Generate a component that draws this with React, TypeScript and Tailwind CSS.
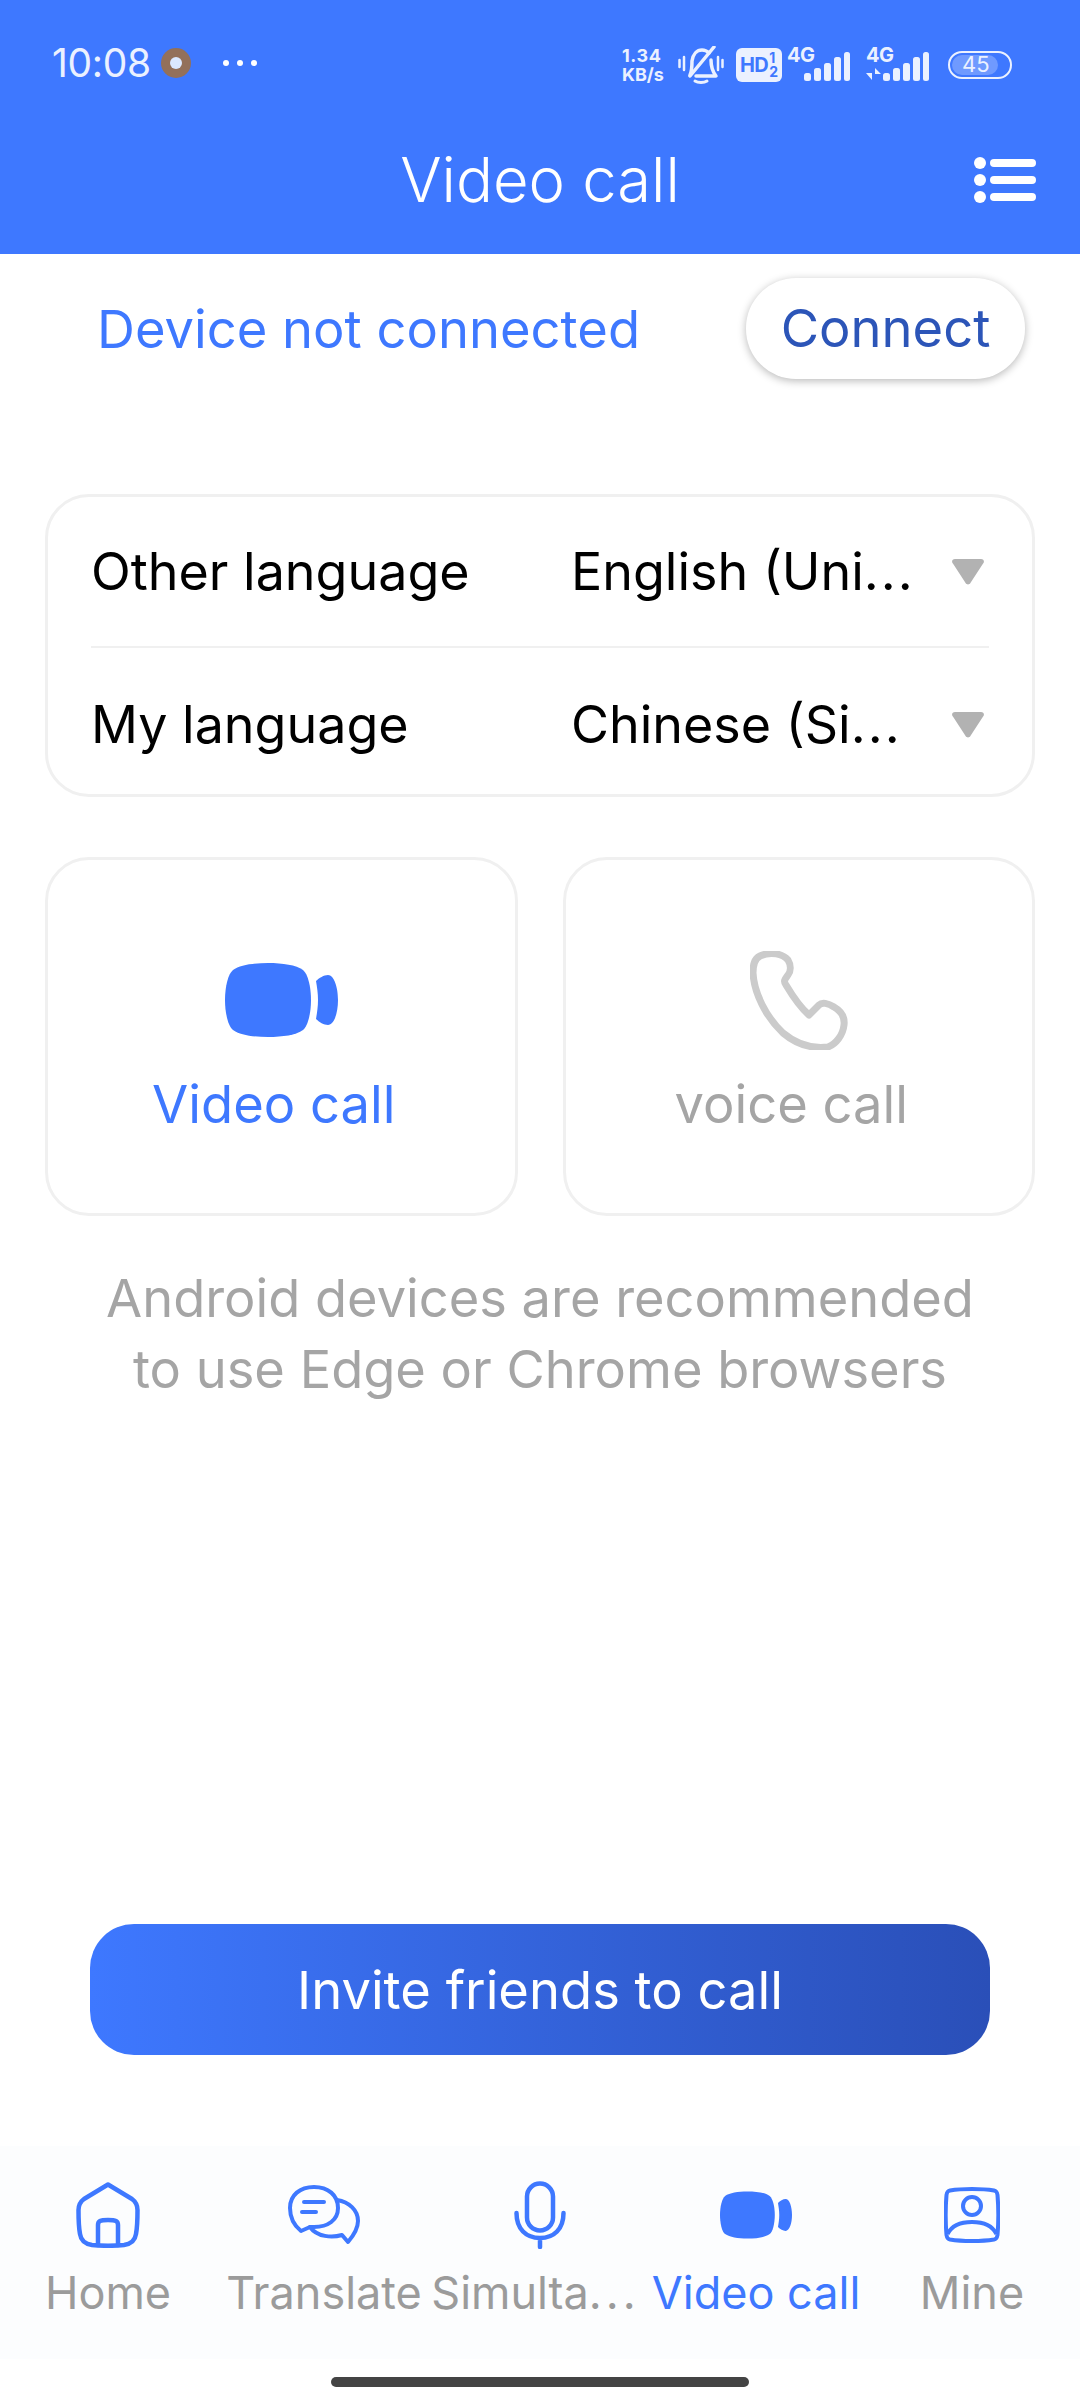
const font = { fontFamily: '"Inter", "Noto Sans", sans-serif' };

function VideoIcon({ className }: { className?: string }) {
  return (
    <svg viewBox="0 0 113 74" className={className} fill="#3e78ff">
      <path d="M8 7 C15 2 28 0 43 0 C58 0 71 2 78 7 C83 11 86 24 86 37 C86 50 83 63 78 67 C71 72 58 74 43 74 C28 74 15 72 8 67 C3 63 0 50 0 37 C0 24 3 11 8 7 Z" />
      <path d="M91 18 C94 15 99 12 103 12 C109 12 113 24 113 37 C113 50 109 62 103 62 C99 62 94 59 91 56 C92 50 93 44 93 37 C93 30 92 24 91 18 Z" />
    </svg>
  );
}

function HomeIcon() {
  return (
    <svg viewBox="0 0 64 66" className="h-[66px] w-[64px]" fill="none" stroke="#3e78ff" strokeWidth="4.5" strokeLinejoin="round" strokeLinecap="round">
      <path d="M32 2.5 L56 17 C60 20 61.5 23 61.5 28 C61.5 36 61.5 44 60 52 C59 59 55 62 48 63 C38 64 26 64 16 63 C9 62 5 59 4 52 C2.5 44 2.5 36 2.5 28 C2.5 23 4 20 8 17 Z" />
      <path d="M22 63 V43 C22 39 24 38 32 38 C40 38 42 39 42 43 V63" />
    </svg>
  );
}

function ChatIcon() {
  return (
    <svg viewBox="0 0 72 60" className="h-[60px] w-[72px]" fill="none" stroke="#3e78ff" strokeWidth="4" strokeLinejoin="round" strokeLinecap="round">
      <path d="M26 2 C40 2 50 10 50 23 C50 35 40 42 26 42 L22 42 L13 46 C8 42 2 34 2 23 C2 10 12 2 26 2 Z" />
      <path d="M49 15 C61 17 70 25 70 36 C70 44 66 50 60 57 L54 50 C44 53 29 52 22 42" />
      <path d="M16 17 H36 M14 27 H28" strokeWidth="4" />
    </svg>
  );
}

function MicIcon() {
  return (
    <svg viewBox="0 0 52 68" className="h-[68px] w-[52px]" fill="none" stroke="#3e78ff" strokeWidth="4.5" strokeLinecap="round">
      <rect x="13" y="2.5" width="26" height="47" rx="13" />
      <path d="M2.5 32 C2.5 48 12 57 26 57 C40 57 49.5 48 49.5 32 M26 57 V66" />
    </svg>
  );
}

function MineIcon() {
  return (
    <svg viewBox="0 0 56 56" className="h-[56px] w-[56px]" fill="none" stroke="#3e78ff" strokeWidth="4">
      <path d="M6 3.5 C18 1.5 38 1.5 50 3.5 C52.5 4 53 5 53.5 8 C54.5 20 54.5 36 53.5 48 C53 51 52.5 52 50 52.5 C38 54.5 18 54.5 6 52.5 C3.5 52 3 51 2.5 48 C1.5 36 1.5 20 2.5 8 C3 5 3.5 4 6 3.5 Z" />
      <circle cx="28" cy="19" r="9" />
      <path d="M3.5 47 C8 38 18 35 28 35 C38 35 48 38 52.5 47" />
    </svg>
  );
}

function PhoneIcon() {
  return (
    <svg viewBox="0 0 98 99" className="h-[99px] w-[98px]" fill="none" stroke="#cbcbcb" strokeWidth="7" strokeLinejoin="round">
      <path d="M10 5 C4 8 3 14 3 22 C4 42 16 66 33 82 C46 93 62 98 78 96 C86 93 93 84 94 74 C95 66 91 60 84 56 C78 52 72 51 69 54 L59 64 C52 58 42 44 36 34 C33 30 35 28 38 24 C41 20 41 14 38 9 C33 3 21 0 10 5 Z" />
    </svg>
  );
}

function Signal({ arrows }: { arrows?: boolean }) {
  return (
    <div className="relative h-[36px] w-[66px]">
      <span className="absolute left-0 top-[-4px] text-[20px] font-bold leading-[24px] tracking-[-0.5px]">4G</span>
      <svg viewBox="0 0 66 36" className="h-[36px] w-[66px]" fill="#ebf1ff">
        {arrows && <path d="M6 22 V33 L0 26 H6 Z M9 33 V21 L15 27 H9 Z" />}
        <rect x="17" y="26" width="7" height="8" rx="2.5" />
        <rect x="27" y="21" width="7" height="13" rx="2.5" />
        <rect x="37" y="16" width="7" height="18" rx="2.5" />
        <rect x="47" y="10" width="7" height="24" rx="2.5" />
        <rect x="57" y="5" width="6" height="29" rx="2.5" />
      </svg>
    </div>
  );
}

function StatusBar() {
  return (
    <div className="flex h-[84px] items-end justify-between pl-[52px] pr-[68px] text-[#ebf1ff]">
      <div className="flex items-center">
        <span className="text-[39px] leading-[42px] tracking-[-0.3px]">10:08</span>
        <span className="ml-[10px] flex h-[30px] w-[30px] items-center justify-center rounded-full bg-[#93705a]">
          <span className="h-[12px] w-[12px] rounded-full bg-[#dbe8ff]" />
        </span>
        <span className="ml-[32px] flex gap-[8px]">
          <span className="h-[6px] w-[6px] rounded-full bg-white" />
          <span className="h-[6px] w-[6px] rounded-full bg-white" />
          <span className="h-[6px] w-[6px] rounded-full bg-white" />
        </span>
      </div>
      <div className="flex items-center">
        <div className="flex w-[46px] flex-col items-start text-[18px] font-bold leading-[19px]">
          <span className="tracking-[0.6px]">1.34</span>
          <span>KB/s</span>
        </div>
        <svg viewBox="0 0 46 38" className="ml-[10px] h-[38px] w-[46px]" fill="none" stroke="#ebf1ff" strokeWidth="3.5" strokeLinecap="round" strokeLinejoin="round">
          <path d="M1.5 14 V21 M6 11 V24 M40 11 V24 M44.5 14 V21" strokeWidth="2.5" />
          <path d="M12 29 C14 25 14 20 14 15 C15 8 19 4 24 4 C27 4 29 5 31 7 M33 14 C33 21 34 25 38 30 L18 30" />
          <path d="M12 30 L36 1" />
          <path d="M17 35 C20 37 26 37 29 35" strokeWidth="3" />
        </svg>
        <div className="ml-[12px] flex h-[34px] w-[46px] items-center justify-center rounded-[6px] bg-[#ebf1ff] text-[#3e78ff]">
          <span className="text-[20px] font-bold leading-none tracking-[-0.5px]">HD</span>
          <span className="ml-[1px] flex flex-col text-[14px] font-bold leading-[14px]">
            <span>1</span>
            <span>2</span>
          </span>
        </div>
        <div className="ml-[5px]"><Signal /></div>
        <div className="ml-[13px]"><Signal arrows /></div>
        <div className="relative ml-[16px] flex h-[28px] w-[64px] items-center rounded-full border-[2.5px] border-[#ebf1ff] p-[2px]">
          <span className="h-full w-[46px] rounded-full bg-[#6f9aff]" />
          <span className="absolute left-[12px] top-[0px] text-[22px] leading-[23px]">45</span>
        </div>
      </div>
    </div>
  );
}

function NavBar() {
  return (
    <div className="relative flex h-[170px] items-center justify-center pt-[22px]">
      <h1 className="text-[61.5px] font-light leading-[72px] text-white">Video call</h1>
      <div className="absolute right-[44px] top-[73px] flex flex-col gap-[5px]">
        {[0, 1, 2].map((i) => (
          <div key={i} className="flex items-center gap-[4px]">
            <span className="h-[12px] w-[12px] rounded-full bg-white" />
            <span className="h-[8px] w-[46px] rounded-full bg-white" />
          </div>
        ))}
      </div>
    </div>
  );
}

function LangRow({ label, value, className }: { label: string; value: string; className: string }) {
  return (
    <div className={`flex items-center justify-between ${className}`}>
      <span className="text-[52px] leading-[60px] text-black">{label}</span>
      <div className="flex w-[418px] items-center justify-between">
        <span className="whitespace-nowrap text-[52px] leading-[60px] text-black">
          {value}
          <span className="tracking-[2px]">...</span>
        </span>
        <svg viewBox="0 0 33 27" className="mr-[5px] h-[26px] w-[32px]" fill="#b2b2b2">
          <path d="M3 0 H30 C33 0 34 3 32 5 L19 25 C18 27 15 27 14 25 L1 5 C-1 3 0 0 3 0 Z" />
        </svg>
      </div>
    </div>
  );
}

function CallCard({ label, active, children }: { label: string; active?: boolean; children: React.ReactNode }) {
  return (
    <div className="flex h-[359px] flex-1 flex-col items-center rounded-[44px] border-[3px] border-[#f0f0f0] pt-[90px]">
      <div className="flex h-[100px] items-center justify-center">{children}</div>
      <span className={`mr-[15px] mt-[24px] text-[52.5px] leading-[60px] ${active ? "text-[#3e78ff]" : "text-[#a5a5a5]"}`}>{label}</span>
    </div>
  );
}

function Tab({ label, tail, active, children }: { label: string; tail?: string; active?: boolean; children: React.ReactNode }) {
  return (
    <div className="flex flex-col items-center">
      <div className="flex h-[70px] items-center justify-center">{children}</div>
      <span className={`mt-[18px] whitespace-nowrap text-[45px] leading-[50px] ${tail ? "mr-[9px]" : ""} ${active ? "text-[#3e78ff]" : "text-[#9b9b9b]"}`}>
        {label}
        {tail && <span className="tracking-[4px]">{tail}</span>}
      </span>
    </div>
  );
}

export default function App() {
  return (
    <div className="flex h-[2400px] w-[1080px] flex-col overflow-hidden bg-white" style={font}>
      <header className="h-[254px] bg-[#3e78ff]">
        <StatusBar />
        <NavBar />
      </header>

      <main className="flex flex-1 flex-col">
        <div className="flex items-center pl-[97px] pr-[55px] pt-[24px]">
          <span className="flex-1 text-[52.5px] leading-[62px] text-[#3e78ff]">Device not connected</span>
          <button className="flex h-[101px] w-[279px] items-center justify-center rounded-[50px] bg-white text-[52.5px] text-[#2c55b8] shadow-[0_2px_8px_rgba(0,0,0,0.28)]">Connect</button>
        </div>

        <section className="mx-[45px] mt-[115px] flex h-[303px] flex-col rounded-[44px] border-[3px] border-[#f0f0f0] px-[43px]">
          <LangRow label="Other language" value="English (Uni" className="h-[149px]" />
          <div className="h-[2px] bg-[#f0f0f0]" />
          <LangRow label="My language" value="Chinese (Si" className="h-[146px] pt-[8px]" />
        </section>

        <section className="mx-[45px] mt-[60px] flex gap-[45px]">
          <CallCard label="Video call" active>
            <VideoIcon className="h-[74px] w-[113px]" />
          </CallCard>
          <CallCard label="voice call">
            <PhoneIcon />
          </CallCard>
        </section>

        <p className="mt-[47px] text-center text-[52.4px] leading-[71px] text-[#a5a5a5]">
          Android devices are recommended
          <br />
          to use Edge or Chrome browsers
        </p>

        <div className="mt-auto px-[90px]">
          <button className="flex h-[131px] w-full items-center justify-center rounded-[44px] bg-gradient-to-r from-[#3e78ff] to-[#2a4fb8] text-[52.5px] text-white">
            <span className="translate-y-[1px]">Invite friends to call</span>
          </button>
        </div>

        <nav className="mt-[91px] grid h-[213px] grid-cols-5 items-start bg-[#fcfdfe] pt-[34px]">
          <Tab label="Home"><HomeIcon /></Tab>
          <Tab label="Translate"><ChatIcon /></Tab>
          <Tab label="Simulta" tail="..."><MicIcon /></Tab>
          <Tab label="Video call" active><VideoIcon className="h-[48px] w-[72px]" /></Tab>
          <Tab label="Mine"><MineIcon /></Tab>
        </nav>

        <div className="flex h-[41px] items-start justify-center pt-[18px]">
          <div className="h-[10px] w-[418px] rounded-full bg-[#444444]" />
        </div>
      </main>
    </div>
  );
}
